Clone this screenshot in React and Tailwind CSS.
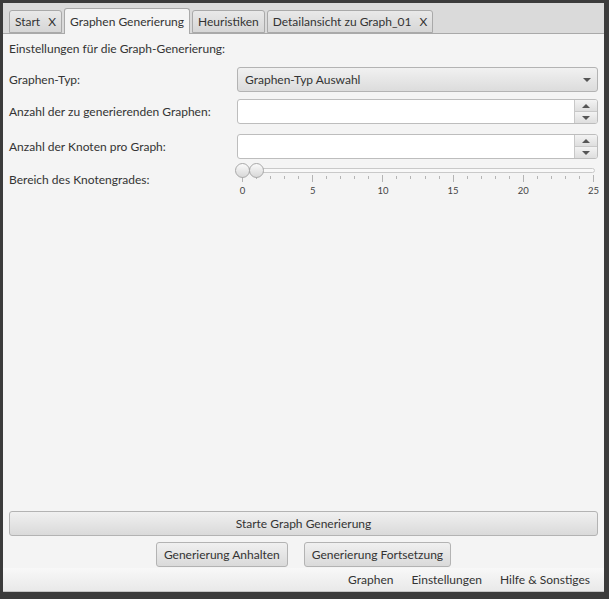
import React from 'react';

const font = { fontFamily: 'Lato, "Open Sans", sans-serif' };

function Tab({ label, closable, active }) {
    return (
        <div
            className={
                'flex items-center gap-[8px] px-[5px] border border-[#a9a9a9] rounded-t-[3px] text-[12px] text-[#333] ' +
                (active
                    ? 'h-[26px] bg-[#f4f4f4] border-b-0 -mb-px'
                    : 'h-[23px] bg-gradient-to-b from-[#e9e9e9] to-[#d6d6d6]')
            }
        >
            <span>{label}</span>
            {closable && <span>X</span>}
        </div>
    );
}

function Arrow({ up }) {
    return (
        <svg width="8" height="4" viewBox="0 0 8 4">
            <path d={up ? 'M0 4 L4 0 L8 4 Z' : 'M0 0 L8 0 L4 4 Z'} fill="#555" />
        </svg>
    );
}

function Spinner() {
    return (
        <div className="flex h-[25px] flex-1 border border-[#bdbdbd] rounded-[3px] bg-white overflow-hidden">
            <div className="flex-1" />
            <div className="flex w-[23px] flex-col border-l border-[#c8c8c8]">
                <div className="flex flex-1 items-center justify-center bg-gradient-to-b from-[#f3f3f3] to-[#dedede] border-b border-[#c8c8c8]">
                    <Arrow up />
                </div>
                <div className="flex flex-1 items-center justify-center bg-gradient-to-b from-[#f3f3f3] to-[#dedede]">
                    <Arrow />
                </div>
            </div>
        </div>
    );
}

function Row({ label, children, className }) {
    return (
        <div className={'flex items-center ' + (className || '')}>
            <div className="w-[228px] shrink-0 text-[12px] text-[#333]">{label}</div>
            {children}
        </div>
    );
}

function Slider() {
    const x0 = 5;
    const step = 14.04;
    const ticks = [];
    for (let i = 0; i <= 25; i++) {
        const x = Math.round(x0 + i * step) + 0.5;
        const major = i % 5 === 0;
        ticks.push(<line key={i} x1={x} x2={x} y1={major ? 12 : 13} y2={major ? 19 : 16} stroke="#b4b4b4" strokeWidth="1" />);
    }
    return (
        <div className="relative h-[34px] flex-1">
            <div className="absolute left-[5px] right-[3px] top-[5px] h-[5px] rounded-full border border-[#c9c9c9] bg-[#f8f8f8]" />
            <svg className="absolute left-0 top-0" width="362" height="22">
                {ticks}
            </svg>
            {[0, 1].map((v) => (
                <div
                    key={v}
                    className="absolute top-0 h-[15px] w-[15px] rounded-full border border-[#a8a8a8] bg-gradient-to-b from-[#fafafa] to-[#d8d8d8]"
                    style={{ left: x0 + v * step - 7 }}
                />
            ))}
            {[0, 5, 10, 15, 20, 25].map((v) => (
                <span
                    key={v}
                    className="absolute top-[21px] w-[20px] -translate-x-1/2 text-center text-[9.5px] text-[#444]"
                    style={{ left: x0 + v * step + 0.5 }}
                >
                    {v}
                </span>
            ))}
        </div>
    );
}

export default function App() {
    return (
        <div className="w-[609px] h-[599px] bg-[#3b3b3b] pt-[3px] pl-[3px] pr-[5px] pb-[7px]" style={font}>
            <div className="flex h-full flex-col bg-[#f4f4f4]">
                {/* Tab header */}
                <div className="flex h-[31px] shrink-0 items-end gap-[2px] border-b border-[#a9a9a9] bg-[#dadada] pl-[6px]">
                    <Tab label="Start" closable />
                    <Tab label="Graphen Generierung" active />
                    <Tab label="Heuristiken" />
                    <Tab label="Detailansicht zu Graph_01" closable />
                </div>

                {/* Settings */}
                <div className="flex flex-1 flex-col px-[6px] pt-[6px]">
                    <div className="text-[12px] text-[#333]">Einstellungen für die Graph-Generierung:</div>
                    <Row label="Graphen-Typ:" className="mt-[9px]">
                        <div className="flex h-[25px] flex-1 items-center justify-between rounded-[3px] border border-[#b3b3b3] bg-gradient-to-b from-[#f1f1f1] to-[#dcdcdc] pl-[7px] pr-[6px] text-[12px] text-[#333]">
                            <span>Graphen-Typ Auswahl</span>
                            <Arrow />
                        </div>
                    </Row>
                    <Row label="Anzahl der zu generierenden  Graphen:" className="mt-[7px]">
                        <Spinner />
                    </Row>
                    <Row label="Anzahl der Knoten pro Graph:" className="mt-[10px]">
                        <Spinner />
                    </Row>
                    <Row label="Bereich des Knotengrades:" className="mt-[4px]">
                        <Slider />
                    </Row>
                </div>

                {/* Buttons */}
                <div className="flex flex-col items-center gap-[6px] px-[6px] pb-px">
                    <button className="h-[25px] w-full rounded-[3px] border border-[#b3b3b3] bg-gradient-to-b from-[#f0f0f0] to-[#dadada] text-[12px] text-[#333]">
                        Starte Graph Generierung
                    </button>
                    <div className="flex gap-[16px]">
                        <button className="h-[25px] rounded-[3px] border border-[#b3b3b3] bg-gradient-to-b from-[#f0f0f0] to-[#dadada] px-[7px] text-[12px] text-[#333]">
                            Generierung Anhalten
                        </button>
                        <button className="h-[25px] rounded-[3px] border border-[#b3b3b3] bg-gradient-to-b from-[#f0f0f0] to-[#dadada] px-[7px] text-[12px] text-[#333]">
                            Generierung Fortsetzung
                        </button>
                    </div>
                </div>

                {/* Menu bar */}
                <div className="flex h-[24px] shrink-0 items-center justify-end gap-[18px] border-b border-[#c4c4c4] bg-gradient-to-b from-[#f8f8f8] to-[#e9e9e9] pr-[14px] text-[12px] text-[#333]">
                    <span>Graphen</span>
                    <span>Einstellungen</span>
                    <span>Hilfe &amp; Sonstiges</span>
                </div>
            </div>
        </div>
    );
}
